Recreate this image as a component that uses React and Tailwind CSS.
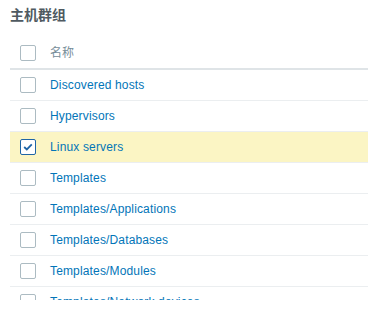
const groups = [
  { name: "Discovered hosts" },
  { name: "Hypervisors" },
  { name: "Linux servers", checked: true },
  { name: "Templates" },
  { name: "Templates/Applications" },
  { name: "Templates/Databases" },
  { name: "Templates/Modules" },
  { name: "Templates/Network devices" },
];

function Checkbox({ checked }) {
  return (
    <span
      className={`flex h-4 w-4 shrink-0 items-center justify-center rounded-[2px] border bg-white ${
        checked ? "border-[#1f65a6]" : "border-[#acbbc2]"
      }`}
    >
      {checked && (
        <svg width="10" height="8" viewBox="0 0 10 8">
          <path d="M1.2 4 L3.8 6.4 L8.8 1.4" fill="none" stroke="#1f65a6" strokeWidth="1.8" />
        </svg>
      )}
    </span>
  );
}

export default function App() {
  return (
    <div className="h-[318px] w-[368px] bg-white font-['Liberation_Sans','Noto_Sans_CJK_SC',sans-serif]">
      <div className="h-[300px] overflow-hidden pl-[10px]">
        <h2 className="pt-[7px] text-[14px] font-bold leading-[16px] text-[#4f5a61]">主机群组</h2>

        {/* header */}
        <div className="mt-[15px] flex h-[32px] items-center border-b-2 border-[#dfe4e7] pb-[1px] pl-[10px]">
          <Checkbox />
          <span className="ml-[14px] text-[12px] text-[#768d99]">名称</span>
        </div>

        {groups.map((g) => (
          <div
            key={g.name}
            className={`flex h-[31px] items-center border-b border-[#ebeef0] pl-[10px] ${
              g.checked ? "bg-[#fbf5c4]" : ""
            }`}
          >
            <Checkbox checked={g.checked} />
            <span className="ml-[14px] text-[12px] tracking-[0.15px] text-[#0275b8]">{g.name}</span>
          </div>
        ))}
      </div>
    </div>
  );
}
